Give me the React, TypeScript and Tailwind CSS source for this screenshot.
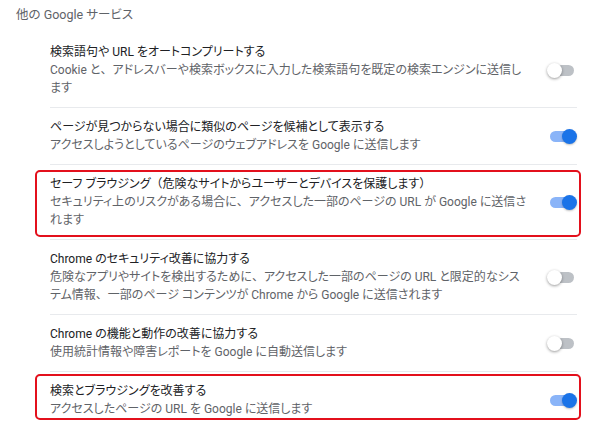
import React from "react";

type Item = {
  title: string;
  desc: string[];
  on: boolean;
  mark?: "top" | "bottom";
};

const items: Item[] = [
  {
    title: "検索語句や URL をオートコンプリートする",
    desc: [
      "Cookie と、アドレスバーや検索ボックスに入力した検索語句を既定の検索エンジンに送信し",
      "ます",
    ],
    on: false,
  },
  {
    title: "ページが見つからない場合に類似のページを候補として表示する",
    desc: ["アクセスしようとしているページのウェブアドレスを Google に送信します"],
    on: true,
  },
  {
    title: "セーフ ブラウジング（危険なサイトからユーザーとデバイスを保護します）",
    desc: [
      "セキュリティ上のリスクがある場合に、アクセスした一部のページの URL が Google に送信さ",
      "れます",
    ],
    on: true,
    mark: "top",
  },
  {
    title: "Chrome のセキュリティ改善に協力する",
    desc: [
      "危険なアプリやサイトを検出するために、アクセスした一部のページの URL と限定的なシス",
      "テム情報、一部のページ コンテンツが Chrome から Google に送信されます",
    ],
    on: false,
  },
  {
    title: "Chrome の機能と動作の改善に協力する",
    desc: ["使用統計情報や障害レポートを Google に自動送信します"],
    on: false,
  },
  {
    title: "検索とブラウジングを改善する",
    desc: ["アクセスしたページの URL を Google に送信します"],
    on: true,
    mark: "bottom",
  },
];

// kana are set proportional, but punctuation keeps its full width
function Jp({ text }: { text: string }) {
  return (
    <>
      {text.split(/([、（）])/).map((part, i) =>
        /^[、（）]$/.test(part) ? (
          <span key={i} className="[font-feature-settings:normal]">
            {part}
          </span>
        ) : (
          part
        )
      )}
    </>
  );
}

// knob hangs 3px past the track end on either side
function Toggle({ on }: { on: boolean }) {
  return (
    <div
      className={`flex items-center w-[24px] h-[11px] mr-[3px] rounded-full ${
        on ? "justify-end bg-[#8ab4f8]" : "justify-start bg-[#bdc1c6]"
      }`}
    >
      <div
        className={`shrink-0 w-[15px] h-[15px] rounded-full ${
          on
            ? "-mr-[3px] bg-[#1a73e8] shadow-[0_1px_2px_rgba(0,0,0,0.25)]"
            : "-ml-[3px] bg-white shadow-[0_1px_3px_rgba(0,0,0,0.4)]"
        }`}
      />
    </div>
  );
}

export default function App() {
  return (
    <div className="w-[590px] h-[425px] bg-white overflow-hidden font-['Roboto','Noto_Sans_CJK_JP',sans-serif] [font-feature-settings:'palt'] text-[12px] leading-[18px]">
      <div className="pl-[16px] pt-[6px] text-[#5f6368] text-[12.5px]">他の Google サービス</div>
      <div className="mt-[9px] ml-[50px] w-[527px]">
        {items.map((item, i) => (
          <div
            key={i}
            className={`relative flex items-center justify-between gap-4 py-[10px] ${
              i > 0 ? "border-t border-[#e8eaed]" : ""
            }`}
          >
            <div>
              <div className="text-[#202124] whitespace-nowrap">
                <Jp text={item.title} />
              </div>
              {item.desc.map((line, j) => (
                <div key={j} className="text-[#5f6368] whitespace-nowrap">
                  <Jp text={line} />
                </div>
              ))}
            </div>
            <Toggle on={item.on} />
            {item.mark === "top" && (
              <span className="absolute left-[-15px] right-[-4px] top-[5px] bottom-[2px] border-2 border-[#e3101c] rounded-[5px] pointer-events-none" />
            )}
            {item.mark === "bottom" && (
              <span className="absolute left-[-15px] right-[-4px] top-[2px] bottom-[8px] border-2 border-[#e3101c] rounded-[5px] pointer-events-none" />
            )}
          </div>
        ))}
      </div>
    </div>
  );
}
